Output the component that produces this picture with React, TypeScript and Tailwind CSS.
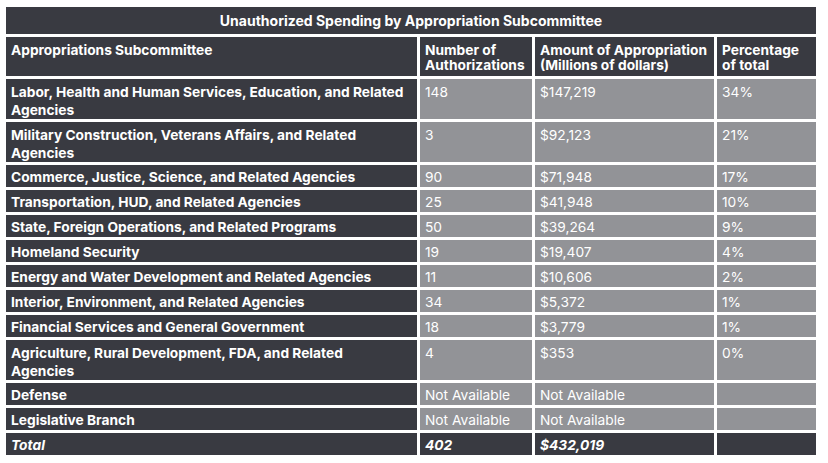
const rows = [
  { name: ["Labor, Health and Human Services, Education, and Related", "Agencies"], count: "148", amount: "$147,219", pct: "34%" },
  { name: ["Military Construction, Veterans Affairs, and Related", "Agencies"], count: "3", amount: "$92,123", pct: "21%" },
  { name: ["Commerce, Justice, Science, and Related Agencies"], count: "90", amount: "$71,948", pct: "17%" },
  { name: ["Transportation, HUD, and Related Agencies"], count: "25", amount: "$41,948", pct: "10%" },
  { name: ["State, Foreign Operations, and Related Programs"], count: "50", amount: "$39,264", pct: "9%" },
  { name: ["Homeland Security"], count: "19", amount: "$19,407", pct: "4%" },
  { name: ["Energy and Water Development and Related Agencies"], count: "11", amount: "$10,606", pct: "2%" },
  { name: ["Interior, Environment, and Related Agencies"], count: "34", amount: "$5,372", pct: "1%" },
  { name: ["Financial Services and General Government"], count: "18", amount: "$3,779", pct: "1%" },
  { name: ["Agriculture, Rural Development, FDA, and Related", "Agencies"], count: "4", amount: "$353", pct: "0%" },
  { name: ["Defense"], count: "Not Available", amount: "Not Available", pct: "" },
  { name: ["Legislative Branch"], count: "Not Available", amount: "Not Available", pct: "" },
]

const dark = "bg-[#393a41] text-white font-bold"
const grey = "bg-[#929397] text-white font-normal"

export default function App() {
  return (
    <div className="w-[828px] h-[463px] bg-white pt-[7px] pl-[6px] font-['Inter',sans-serif] text-[13.75px] leading-[18px]">
      <div className="grid w-[810px] grid-cols-[411px_112px_179px_99px] gap-[3px]">
        <div className={`${dark} col-span-4 h-[27px] flex items-center justify-center text-[14px]`}>
          Unauthorized Spending by Appropriation Subcommittee
        </div>

        <div className={`${dark} h-[39px] px-[5px] pt-[6px] leading-[15px]`}>Appropriations Subcommittee</div>
        <div className={`${dark} h-[39px] px-[5px] pt-[6px] leading-[15px] whitespace-nowrap`}>
          Number of
          <br />
          Authorizations
        </div>
        <div className={`${dark} h-[39px] px-[5px] pt-[6px] leading-[15px] whitespace-nowrap`}>
          Amount of Appropriation
          <br />
          (Millions of dollars)
        </div>
        <div className={`${dark} h-[39px] px-[5px] pt-[6px] leading-[15px] whitespace-nowrap`}>
          Percentage
          <br />
          of total
        </div>

        {rows.map((r, i) => {
          const cell = r.name.length > 1 ? "h-[40px] pt-[4px]" : "h-[22px] pt-[3px]"
          return [
            <div key={`n${i}`} className={`${dark} ${cell} px-[5px] whitespace-nowrap`}>
              {r.name[0]}
              {r.name[1] && (
                <>
                  <br />
                  {r.name[1]}
                </>
              )}
            </div>,
            <div key={`c${i}`} className={`${grey} ${cell} px-[5px] whitespace-nowrap`}>{r.count}</div>,
            <div key={`a${i}`} className={`${grey} ${cell} px-[5px] whitespace-nowrap`}>{r.amount}</div>,
            <div key={`p${i}`} className={`${grey} ${cell} px-[5px] whitespace-nowrap`}>{r.pct}</div>,
          ]
        })}

        <div className={`${dark} h-[22px] px-[5px] pt-[3px] italic`}>Total</div>
        <div className={`${dark} h-[22px] px-[5px] pt-[3px] italic`}>402</div>
        <div className={`${dark} h-[22px] px-[5px] pt-[3px] italic`}>$432,019</div>
        <div className={`${dark} h-[22px]`}></div>
      </div>
    </div>
  )
}
